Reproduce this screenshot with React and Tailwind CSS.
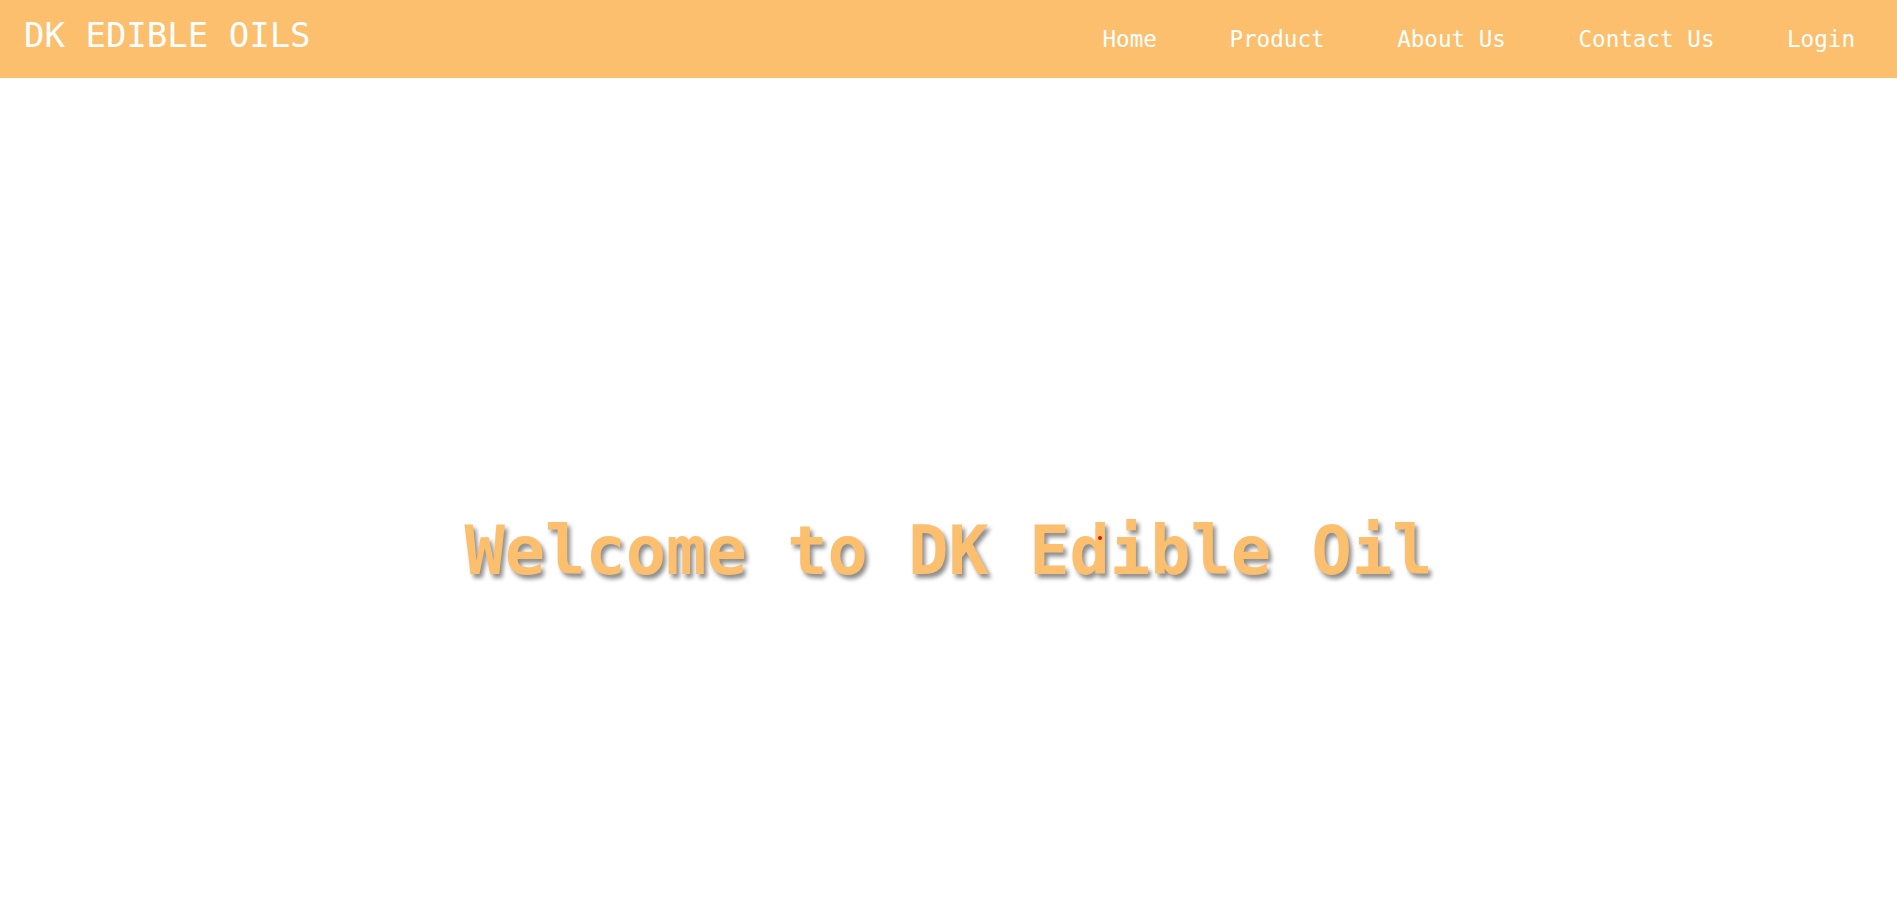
export default function App() {
  const links = ['Home', 'Product', 'About Us', 'Contact Us', 'Login'];

  return (
    <div className="min-h-screen bg-white" style={{ fontFamily: '"DejaVu Sans Mono", "Liberation Mono", monospace' }}>
      <nav className="flex h-[78px] items-start justify-between bg-[#fbbf6e] pl-6 pr-[42px]">
        <div className="pt-[15px] text-[34px] leading-[40px] text-white">DK EDIBLE OILS</div>
        <ul className="flex gap-[72.5px] pt-[25px] text-[22.6px] leading-[28px] text-white">
          {links.map((l) => (
            <li key={l}>
              <a href="#">{l}</a>
            </li>
          ))}
        </ul>
      </nav>

      <section className="relative flex justify-center pt-[433px]">
        <h1 className="text-[67px] font-bold leading-[80px] text-[#fbbf6e] [text-shadow:3px_4px_4px_rgba(0,0,0,0.45)]">
          Welcome to DK Edible Oil
        </h1>
        <span className="absolute left-[1098px] top-[458px] h-[4px] w-[4px] rounded-full bg-[#e01010]"></span>
      </section>
    </div>
  );
}
